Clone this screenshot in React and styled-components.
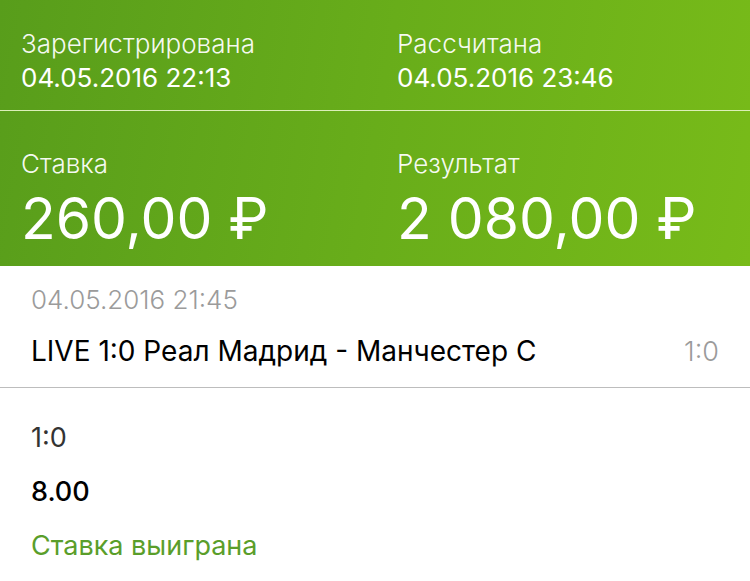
import React from 'react';
import styled, { createGlobalStyle } from 'styled-components';

const GlobalStyle = createGlobalStyle`
  body {
    margin: 0;
    background: #ffffff;
    font-family: Inter, "Liberation Sans", sans-serif;
  }
`;

const Page = styled.div`
  width: 750px;
  height: 581px;
  overflow: hidden;
  background: #ffffff;
`;

const Header = styled.div`
  background: linear-gradient(100deg, #589d1b 0%, #68ad1a 50%, #78bb19 100%);
  color: #ffffff;
`;

const InfoRow = styled.div`
  display: grid;
  grid-template-columns: 376px 1fr;
  padding: ${p => p.$top}px 0 0 21px;
  height: ${p => p.$height}px;
  box-sizing: border-box;
`;

const HeaderDivider = styled.div`
  height: 1px;
  background: #dcefb8;
`;

const Cell = styled.div`
  display: flex;
  flex-direction: column;
`;

const Label = styled.div`
  font-size: 26px;
  line-height: 32px;
  font-weight: 300;
  color: rgba(255, 255, 255, 0.94);
`;

const Value = styled.div`
  font-size: ${p => (p.$big ? 57 : 26)}px;
  line-height: ${p => (p.$big ? 64 : 32)}px;
  margin-top: ${p => (p.$big ? 7 : 2)}px;
  font-weight: 400;
`;

const EventBlock = styled.div`
  padding: 18px 31px 0 31px;
  height: 122px;
  box-sizing: border-box;
  border-bottom: 1px solid #bdbdbd;
`;

const EventDate = styled.div`
  font-size: 26px;
  line-height: 32px;
  font-weight: 300;
  color: #9b9b9b;
`;

const EventRow = styled.div`
  display: flex;
  justify-content: space-between;
  align-items: baseline;
  margin-top: 18px;
`;

const EventTitle = styled.div`
  font-size: 28px;
  line-height: 34px;
  color: #000000;
`;

const EventScore = styled.div`
  font-size: 27px;
  line-height: 34px;
  font-weight: 300;
  color: #9b9b9b;
`;

const Details = styled.div`
  display: flex;
  flex-direction: column;
  gap: 20px;
  padding: 33px 31px 0 31px;
`;

const DetailLine = styled.div`
  font-size: 27px;
  line-height: 34px;
  color: ${p => p.$color};
  font-weight: ${p => (p.$bold ? 500 : 400)};
`;

export default function App() {
  return (
    <Page>
      <GlobalStyle />
      <Header>
        <InfoRow $top={28} $height={110}>
          <Cell>
            <Label>Зарегистрирована</Label>
            <Value>04.05.2016 22:13</Value>
          </Cell>
          <Cell>
            <Label>Рассчитана</Label>
            <Value>04.05.2016 23:46</Value>
          </Cell>
        </InfoRow>
        <HeaderDivider />
        <InfoRow $top={37} $height={155}>
          <Cell>
            <Label>Ставка</Label>
            <Value $big>260,00 ₽</Value>
          </Cell>
          <Cell>
            <Label>Результат</Label>
            <Value $big>2 080,00 ₽</Value>
          </Cell>
        </InfoRow>
      </Header>
      <EventBlock>
        <EventDate>04.05.2016 21:45</EventDate>
        <EventRow>
          <EventTitle>LIVE 1:0 Реал Мадрид - Манчестер С</EventTitle>
          <EventScore>1:0</EventScore>
        </EventRow>
      </EventBlock>
      <Details>
        <DetailLine $color="#333333">1:0</DetailLine>
        <DetailLine $color="#000000" $bold>8.00</DetailLine>
        <DetailLine $color="#5a9e2a">Ставка выиграна</DetailLine>
      </Details>
    </Page>
  );
}
